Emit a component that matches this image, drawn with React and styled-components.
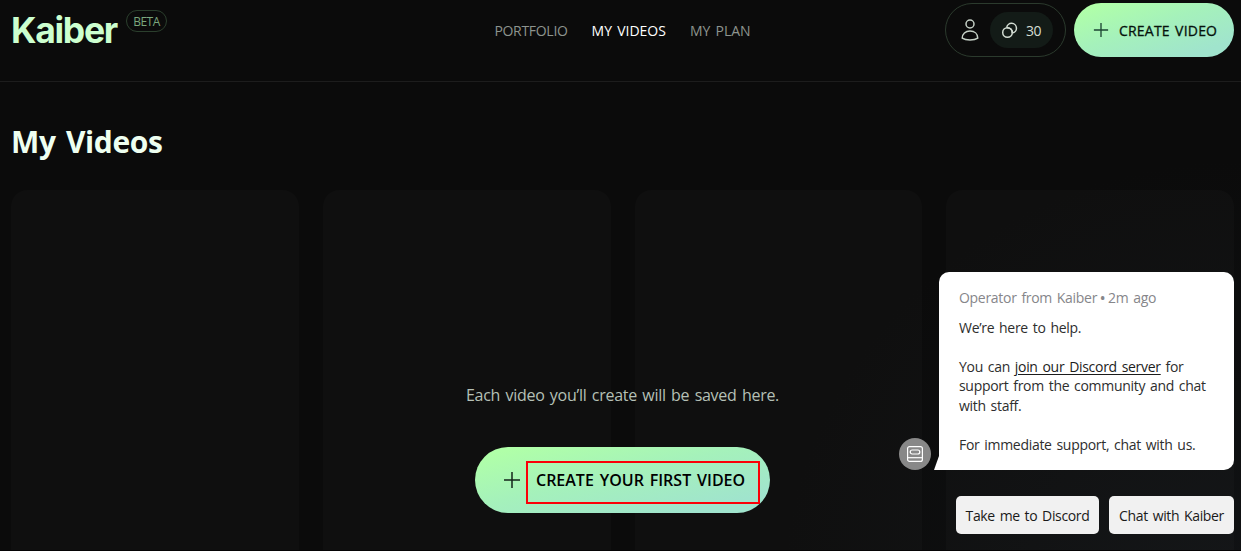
import styled, { createGlobalStyle, css } from 'styled-components';

const GlobalStyle = createGlobalStyle`
  * {
    box-sizing: border-box;
  }
  body {
    margin: 0;
    background: #0b0b0b;
    font-family: 'Open Sans', 'Noto Sans', sans-serif;
    overflow: hidden;
  }
  button {
    font-family: inherit;
    border: none;
    padding: 0;
    cursor: pointer;
  }
`;

const Page = styled.div`
  position: relative;
  height: 551px;
  overflow: hidden;
  background: radial-gradient(
      ellipse 460px 440px at 1241px 600px,
      rgba(22, 26, 30, 0.5),
      transparent
    ),
    #0b0b0b;
`;

const Header = styled.header`
  display: grid;
  grid-template-columns: 1fr auto 1fr;
  align-items: start;
  height: 82px;
  padding: 3px 7px 0 11px;
  border-bottom: 1px solid #1d1d1d;
`;

const Brand = styled.a`
  display: flex;
  align-items: flex-start;
  padding-top: 7px;
`;

const Logo = styled.span`
  width: 114px;
  font-family: Inter, 'Liberation Sans', sans-serif;
  font-size: 35.5px;
  line-height: 41px;
  font-weight: 700;
  letter-spacing: -1.3px;
  color: #ccffcf;
`;

const Beta = styled.span`
  width: 41px;
  height: 22px;
  margin-left: 1px;
  border: 1px solid #2b3f2d;
  border-radius: 11px;
  font-size: 12px;
  line-height: 21px;
  text-align: center;
  letter-spacing: -0.5px;
  color: #7ba77d;
`;

const Nav = styled.nav`
  display: flex;
  gap: 24px;
  padding-top: 18px;
`;

const NavLink = styled.a`
  font-size: 14px;
  line-height: 20px;
  letter-spacing: ${(props) => props.$spacing || 0}px;
  word-spacing: 1.5px;
  color: ${(props) => (props.$active ? '#fff' : '#8d948e')};
`;

const Actions = styled.div`
  display: flex;
  justify-content: flex-end;
  gap: 8px;
`;

const Account = styled.div`
  display: flex;
  align-items: center;
  justify-content: space-between;
  width: 121px;
  height: 54px;
  padding: 0 12px 0 15px;
  border: 1px solid #2b3a2d;
  border-radius: 27px;
`;

const Credits = styled.div`
  display: flex;
  align-items: center;
  gap: 8px;
  width: 63px;
  height: 36px;
  padding-left: 11px;
  border-radius: 18px;
  background: #131b17;
  color: #d3ddd3;
  font-size: 14px;
  letter-spacing: -0.4px;
`;

const CreateButton = styled.button`
  display: flex;
  align-items: center;
  flex-shrink: 0;
  color: #06120c;
  background: linear-gradient(to bottom right, #b0ffa8 8%, #a5f1bb 45%, #a0e4cd 85%);
  white-space: nowrap;
  ${(props) =>
    props.$large
      ? css`
          width: 295px;
          height: 66px;
          padding-left: 28px;
          gap: 15px;
          border-radius: 33px;
          font-size: 16px;
          font-weight: 600;
          word-spacing: 1.7px;
          color: #000;
        `
      : css`
          width: 160px;
          height: 54px;
          padding-left: 19px;
          gap: 10px;
          border-radius: 27px;
          font-size: 14px;
          letter-spacing: 0.2px;
          word-spacing: 1.5px;
          -webkit-text-stroke: 0.3px #06120c;
        `}
`;

const Content = styled.main`
  padding: 0 7px 0 11px;
`;

const Title = styled.h1`
  margin: 0;
  padding-top: 37px;
  font-size: 30px;
  line-height: 46px;
  font-weight: 700;
  letter-spacing: -0.4px;
  word-spacing: 3px;
  color: #eefff0;
`;

const Grid = styled.div`
  display: grid;
  grid-template-columns: repeat(4, 1fr);
  gap: 24px;
  margin-top: 25px;
`;

const Card = styled.div`
  height: 420px;
  border-radius: 16px;
  background: rgba(255, 255, 255, 0.018);
`;

const EmptyState = styled.div`
  position: absolute;
  top: 384px;
  left: 4px;
  right: 0;
  display: flex;
  flex-direction: column;
  align-items: center;
`;

const EmptyText = styled.p`
  margin: 0 0 41px;
  font-size: 16px;
  line-height: 22px;
  letter-spacing: -0.28px;
  word-spacing: 1.5px;
  color: #b5c0b6;
`;

const Highlight = styled.div`
  position: absolute;
  top: 461px;
  left: 526px;
  width: 234px;
  height: 43px;
  border: 2px solid #fb0007;
`;

const Chat = styled.aside`
  position: absolute;
  right: 7px;
  bottom: 17px;
  display: flex;
  flex-direction: column;
  gap: 26px;
`;

const MessageRow = styled.div`
  display: flex;
  align-items: flex-end;
  gap: 8px;
`;

const Avatar = styled.div`
  display: flex;
  align-items: center;
  justify-content: center;
  width: 32px;
  height: 32px;
  border-radius: 50%;
  background: #888;
`;

const Bubble = styled.div`
  position: relative;
  width: 295px;
  height: 198px;
  padding: 16px 20px;
  border-radius: 10px 10px 10px 0;
  background: #fff;
  color: #2e2e2e;
  font-size: 14px;
  line-height: 19.5px;
  letter-spacing: -0.3px;
  word-spacing: 1.5px;
  &::before {
    content: '';
    position: absolute;
    left: -5px;
    bottom: 0;
    width: 6px;
    height: 14px;
    background: #fff;
    clip-path: polygon(100% 0, 83% 0, 0 100%, 100% 100%);
  }
`;

const Meta = styled.div`
  margin-bottom: 10px;
  color: #86868a;
`;

const Dot = styled.span`
  display: inline-block;
  width: 11px;
  text-align: center;
  font-weight: 600;
`;

const Line = styled.div`
  height: 19.5px;
  white-space: nowrap;
  a {
    color: #1c1c1c;
    text-decoration: underline;
    text-underline-offset: 2px;
  }
`;

const Replies = styled.div`
  display: flex;
  justify-content: flex-end;
  gap: 10px;
`;

const Reply = styled.button`
  width: ${(props) => props.$width}px;
  height: 38px;
  padding-top: 1px;
  border-radius: 5px;
  background: #f1f1f1;
  color: #1a1a1a;
  font-size: 14px;
  line-height: 38px;
  letter-spacing: -0.35px;
  word-spacing: 1.5px;
  white-space: nowrap;
`;

const BottomEdge = styled.div`
  position: absolute;
  left: 0;
  right: 0;
  bottom: 0;
  height: 1px;
  background: #050305;
`;

const PlusIcon = ({ size, color = '#1d4433' }) => (
  <svg width={size} height={size} viewBox="0 0 18 18" fill="none">
    <path d="M9 1v16M1 9h16" stroke={color} strokeWidth="1.5" />
  </svg>
);

const UserIcon = () => (
  <svg width="18" height="24" viewBox="0 0 18 24" fill="none" stroke="#c5d0c6" strokeWidth="1.5">
    <circle cx="9" cy="6" r="4" />
    <path
      d="M1.2 20.2C1.2 15.8 4.5 13 9 13s7.8 2.8 7.8 7.2c-2 1.4-4.7 1.9-7.8 1.9s-5.8-.5-7.800-1.900z"
      strokeLinejoin="round"
    />
  </svg>
);

const CoinsIcon = () => (
  <svg width="17" height="17" viewBox="0 0 17 17" fill="none" stroke="#d3ddd3" strokeWidth="1.5">
    <circle cx="6.5" cy="10.5" r="4.8" />
    <path d="M5.7 5.6a4.9 4.9 0 1 1 5.6 5.5" />
    <path d="M5.9 5.7c3-.3 5.5 2 5.4 5.2" />
  </svg>
);

const BotIcon = () => (
  <svg width="18" height="18" viewBox="0 0 18 18" fill="none" stroke="#fff" strokeWidth="1.2">
    <rect x="1.6" y="1.6" width="14.8" height="14.8" rx="2" />
    <rect x="4.2" y="5" width="9.6" height="4" rx="2" />
    <path d="M1.6 12.7h14.8" />
  </svg>
);

export default function App() {
  return (
    <Page>
      <GlobalStyle />
      <Header>
        <Brand>
          <Logo>Kaiber</Logo>
          <Beta>BETA</Beta>
        </Brand>
        <Nav>
          <NavLink $spacing={-0.3}>PORTFOLIO</NavLink>
          <NavLink $active>MY VIDEOS</NavLink>
          <NavLink>MY PLAN</NavLink>
        </Nav>
        <Actions>
          <Account>
            <UserIcon />
            <Credits>
              <CoinsIcon />
              30
            </Credits>
          </Account>
          <CreateButton>
            <PlusIcon size={16} />
            <span>CREATE VIDEO</span>
          </CreateButton>
        </Actions>
      </Header>
      <Content>
        <Title>My Videos</Title>
        <Grid>
          <Card />
          <Card />
          <Card />
          <Card />
        </Grid>
      </Content>
      <EmptyState>
        <EmptyText>Each video you’ll create will be saved here.</EmptyText>
        <CreateButton $large>
          <PlusIcon size={18} color="#14251b" />
          <span>CREATE YOUR FIRST VIDEO</span>
        </CreateButton>
      </EmptyState>
      <Highlight />
      <Chat>
        <MessageRow>
          <Avatar>
            <BotIcon />
          </Avatar>
          <Bubble>
            <Meta>
              Operator from Kaiber<Dot>•</Dot>2m ago
            </Meta>
            <Line>We’re here to help.</Line>
            <Line />
            <Line>
              You can <a>join our Discord server</a> for
            </Line>
            <Line>support from the community and chat</Line>
            <Line>with staff.</Line>
            <Line />
            <Line>For immediate support, chat with us.</Line>
          </Bubble>
        </MessageRow>
        <Replies>
          <Reply $width={143}>Take me to Discord</Reply>
          <Reply $width={125}>Chat with Kaiber</Reply>
        </Replies>
      </Chat>
      <BottomEdge />
    </Page>
  );
}
